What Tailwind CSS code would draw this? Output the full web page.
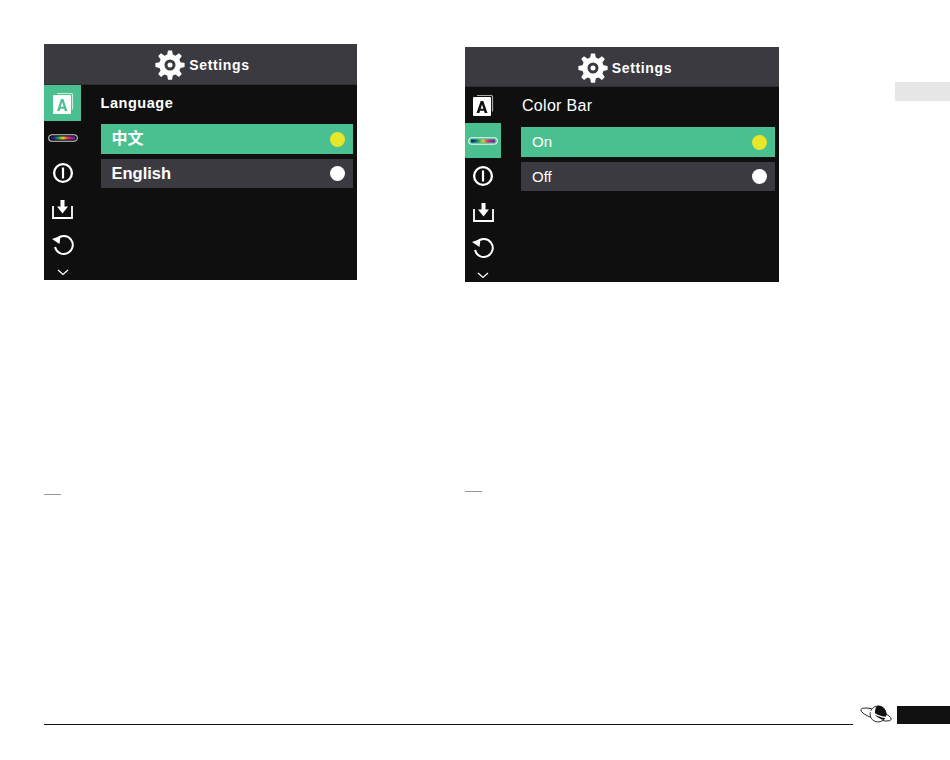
<!DOCTYPE html>
<html>
<head>
  <meta charset="UTF-8">
  <title>Settings manual page</title>
  <script src="https://cdn.jsdelivr.net/npm/@tailwindcss/browser@4"></script>
</head>
<body class="bg-white font-['Liberation_Sans','Noto_Sans_CJK_SC',sans-serif]">
<div class="relative w-[950px] h-[760px] overflow-hidden flex flex-col">

  <!-- top: two device screens -->
  <div class="flex items-start h-[700px] pl-[44px]">

    <!-- left column -->
    <div class="w-[313px] pt-[44px]">
      <div class="w-[313px] h-[236px] bg-[#0f0f10] flex flex-col">
        <div class="h-[41px] bg-[#3b3a40] flex items-center justify-center gap-[4px] border-b border-[#2e2d32] pt-[2px] pl-[4px]">
          <svg width="30" height="30" viewBox="0 0 30 30"><path fill="#fff" fill-rule="evenodd" d="M13 0.500h4l.8 4.100 2.700 1.100 3.500-2.400 2.800 2.800-2.400 3.500 1.100 2.700 4.100.8v4l-4.100.8-1.100 2.700 2.400 3.500-2.800 2.800-3.500-2.400-2.700 1.100-.8 4.100h-4l-.8-4.100-2.700-1.100-3.500 2.400-2.800-2.800 2.400-3.500-1.100-2.700-4.100-.8v-4l4.100-.8 1.100-2.700-2.400-3.500 2.800-2.800 3.500 2.400 2.700-1.100zM15 9.500a5.500 5.500 0 1 0 0 11 5.500 5.500 0 0 0 0-11zM15 12.500a2.500 2.500 0 1 1 0 5 2.500 2.500 0 0 1 0-5z"/></svg>
          <span class="text-white text-[14px] font-bold tracking-[0.65px] mt-[1px]">Settings</span>
        </div>
        <div class="flex flex-1">
          <div class="w-[37px] flex flex-col items-center">
            <div class="w-[37px] h-[36px] bg-[#4abf90] flex items-center justify-center">
              <svg width="22" height="23" viewBox="0 0 22 23"><path d="M5 1.500h14.500a1 1 0 0 1 1 1v15" fill="none" stroke="#c9efe0" stroke-width="1.200"/><rect x="1" y="3" width="18" height="19" rx="1" fill="#fff"/><path d="M5 19l4-12h2.400l4 12h-2.600l-.7-2.300h-3.800l-.7 2.300zM8.700 14.700h3l-1.500-4.800z" fill="#4abf90"/></svg>
            </div>
            <div class="h-[34px] flex items-center justify-center">
              <svg width="30" height="8" viewBox="0 0 30 8"><defs><linearGradient id="bar1"><stop offset="0.1" stop-color="#1c1f8c"/><stop offset="0.3" stop-color="#1f9c5a"/><stop offset="0.5" stop-color="#e0d030"/><stop offset="0.7" stop-color="#e02a6a"/><stop offset="0.9" stop-color="#7a2a9a"/></linearGradient></defs><rect x="0.700" y="0.700" width="28.600" height="6.600" rx="3.300" fill="#111" stroke="#ccc" stroke-width="1.100"/><rect x="3" y="2.500" width="24" height="3" fill="url(#bar1)"/></svg>
            </div>
            <div class="h-[36px] flex items-center justify-center">
              <svg width="22" height="22" viewBox="0 0 22 22"><circle cx="11" cy="11" r="8.900" fill="none" stroke="#fff" stroke-width="2.300"/><path d="M11 5.500v11" stroke="#fff" stroke-width="2.200"/></svg>
            </div>
            <div class="h-[36px] flex items-center justify-center">
              <svg width="21" height="19" viewBox="0 0 21 19"><path d="M1 6v12h19V6" fill="none" stroke="#fff" stroke-width="1.800"/><path d="M8.500 0h4v6.500h3.500l-5.500 7-5.500-7h3.500z" fill="#fff"/></svg>
            </div>
            <div class="h-[35px] flex items-center justify-center">
              <svg width="22" height="21" viewBox="0 0 22 21"><path d="M5 5a9 9 0 1 1-2 8" fill="none" stroke="#fff" stroke-width="2"/><path d="M0 5l8.500-3-1 8z" fill="#fff"/></svg>
            </div>
            <div class="flex-1 flex items-center justify-center pt-[3px]">
              <svg width="12" height="7" viewBox="0 0 12 7"><path d="M1 1l5 4.500L11 1" fill="none" stroke="#fff" stroke-width="1.300"/></svg>
            </div>
          </div>
          <div class="flex-1 pl-[19.500px] pr-[4px]">
            <div class="h-[39px] flex items-center text-white text-[14.500px] font-bold tracking-[0.55px] pb-[2px]">Language</div>
            <div class="h-[30px] bg-[#4abf90] flex items-center justify-between pl-[11px] pr-[8px] mb-[5px]">
              <span class="text-white text-[16px] font-bold">中文</span>
              <span class="w-[15px] h-[15px] rounded-full bg-[#e6e62a]"></span>
            </div>
            <div class="h-[29px] bg-[#3b3a40] flex items-center justify-between pl-[11px] pr-[8px]">
              <span class="text-white text-[16.500px] font-bold">English</span>
              <span class="w-[15px] h-[15px] rounded-full bg-white"></span>
            </div>
          </div>
        </div>
      </div>
      <div class="w-[17px] h-px bg-[#999] mt-[214px]"></div>
    </div>

    <!-- right column -->
    <div class="w-[314px] ml-[108px] pt-[47px]">
      <div class="w-[314px] h-[235px] bg-[#0f0f10] flex flex-col">
        <div class="h-[40px] bg-[#3b3a40] flex items-center justify-center gap-[4px] border-b border-[#2e2d32] pt-[3px] pl-[6px]">
          <svg width="30" height="30" viewBox="0 0 30 30"><path fill="#fff" fill-rule="evenodd" d="M13 0.500h4l.8 4.100 2.700 1.100 3.500-2.400 2.800 2.800-2.400 3.500 1.100 2.700 4.100.8v4l-4.100.8-1.100 2.700 2.400 3.500-2.800 2.800-3.500-2.400-2.700 1.100-.8 4.100h-4l-.8-4.100-2.700-1.100-3.500 2.400-2.800-2.800 2.400-3.500-1.100-2.700-4.100-.8v-4l4.100-.8 1.100-2.700-2.400-3.500 2.800-2.800 3.500 2.400 2.700-1.100zM15 9.500a5.500 5.500 0 1 0 0 11 5.500 5.500 0 0 0 0-11zM15 12.500a2.500 2.500 0 1 1 0 5 2.500 2.500 0 0 1 0-5z"/></svg>
          <span class="text-white text-[14px] font-bold tracking-[0.65px] mt-[1px]">Settings</span>
        </div>
        <div class="flex flex-1">
          <div class="w-[36px] flex flex-col items-center">
            <div class="h-[36px] flex items-center justify-center">
              <svg width="22" height="23" viewBox="0 0 22 23"><path d="M5 1.500h14.500a1 1 0 0 1 1 1v15" fill="none" stroke="#aaa" stroke-width="1.200"/><rect x="1" y="3" width="18" height="19" rx="1" fill="#fff"/><path d="M4.500 19l4.200-12h2.600l4.200 12h-2.800l-.7-2.300h-3.900l-.7 2.300zM8.700 14.700h2.600l-1.300-4.200z" fill="#111"/></svg>
            </div>
            <div class="w-[36px] h-[35px] bg-[#4abf90] flex items-center justify-center">
              <svg width="30" height="8" viewBox="0 0 30 8"><defs><linearGradient id="bar2"><stop offset="0.1" stop-color="#1c1f8c"/><stop offset="0.3" stop-color="#1f9c5a"/><stop offset="0.5" stop-color="#e0d030"/><stop offset="0.7" stop-color="#e02a6a"/><stop offset="0.9" stop-color="#7a2a9a"/></linearGradient></defs><rect x="0.700" y="0.700" width="28.600" height="6.600" rx="3.300" fill="#4abf90" stroke="#e8f8f0" stroke-width="1.100"/><rect x="3" y="2.500" width="24" height="3" fill="url(#bar2)"/></svg>
            </div>
            <div class="h-[36px] flex items-center justify-center">
              <svg width="22" height="22" viewBox="0 0 22 22"><circle cx="11" cy="11" r="8.900" fill="none" stroke="#fff" stroke-width="2.300"/><path d="M11 5.500v11" stroke="#fff" stroke-width="2.200"/></svg>
            </div>
            <div class="h-[36px] flex items-center justify-center">
              <svg width="21" height="19" viewBox="0 0 21 19"><path d="M1 6v12h19V6" fill="none" stroke="#fff" stroke-width="1.800"/><path d="M8.500 0h4v6.500h3.500l-5.500 7-5.500-7h3.500z" fill="#fff"/></svg>
            </div>
            <div class="h-[35px] flex items-center justify-center">
              <svg width="22" height="21" viewBox="0 0 22 21"><path d="M5 5a9 9 0 1 1-2 8" fill="none" stroke="#fff" stroke-width="2"/><path d="M0 5l8.500-3-1 8z" fill="#fff"/></svg>
            </div>
            <div class="flex-1 flex items-center justify-center pt-[3px]">
              <svg width="12" height="7" viewBox="0 0 12 7"><path d="M1 1l5 4.500L11 1" fill="none" stroke="#fff" stroke-width="1.300"/></svg>
            </div>
          </div>
          <div class="flex-1 pl-[20px] pr-[4px]">
            <div class="h-[40px] flex items-center text-white text-[16px] tracking-[0.3px] pb-[3px] pl-[1px]">Color Bar</div>
            <div class="h-[30px] bg-[#4abf90] flex items-center justify-between pl-[11px] pr-[8px] mb-[5px]">
              <span class="text-white text-[15px] pt-[1px]">On</span>
              <span class="w-[15px] h-[15px] rounded-full bg-[#e6e62a]"></span>
            </div>
            <div class="h-[29px] bg-[#3b3a40] flex items-center justify-between pl-[11px] pr-[8px]">
              <span class="text-white text-[15px] pt-[1px]">Off</span>
              <span class="w-[15px] h-[15px] rounded-full bg-white"></span>
            </div>
          </div>
        </div>
      </div>
      <div class="w-[17px] h-px bg-[#999] mt-[209px]"></div>
    </div>

    <div class="w-[55px] h-[19px] bg-[#e6e6e6] ml-[116px] mt-[82px]"></div>
  </div>

  <!-- footer rule, logo and page tab -->
  <div class="flex items-end pl-[44px] mt-[5px] h-[20px]">
    <div class="w-[809px] h-px bg-[#111]"></div>
    <svg class="ml-[7px]" width="32" height="20" viewBox="0 0 32 20"><ellipse cx="16" cy="9.500" rx="16" ry="4.500" transform="rotate(18 16 9.500)" fill="none" stroke="#222" stroke-width="0.900"/><circle cx="18" cy="9" r="8" fill="#fff" stroke="#222" stroke-width="0.900"/><path d="M17 1a8 8 0 0 1 6.500 14c-3-.5-5.500-2.500-8-4.500C14.500 7 15 3.500 17 1z" fill="#111"/><path d="M9 5.500c5 3.500 11 6.500 17 7" fill="none" stroke="#fff" stroke-width="1.400"/></svg>
    <div class="w-[53px] h-[18px] bg-[#111] ml-[5px] mb-[1px]"></div>
  </div>
</div>
</body>
</html>
